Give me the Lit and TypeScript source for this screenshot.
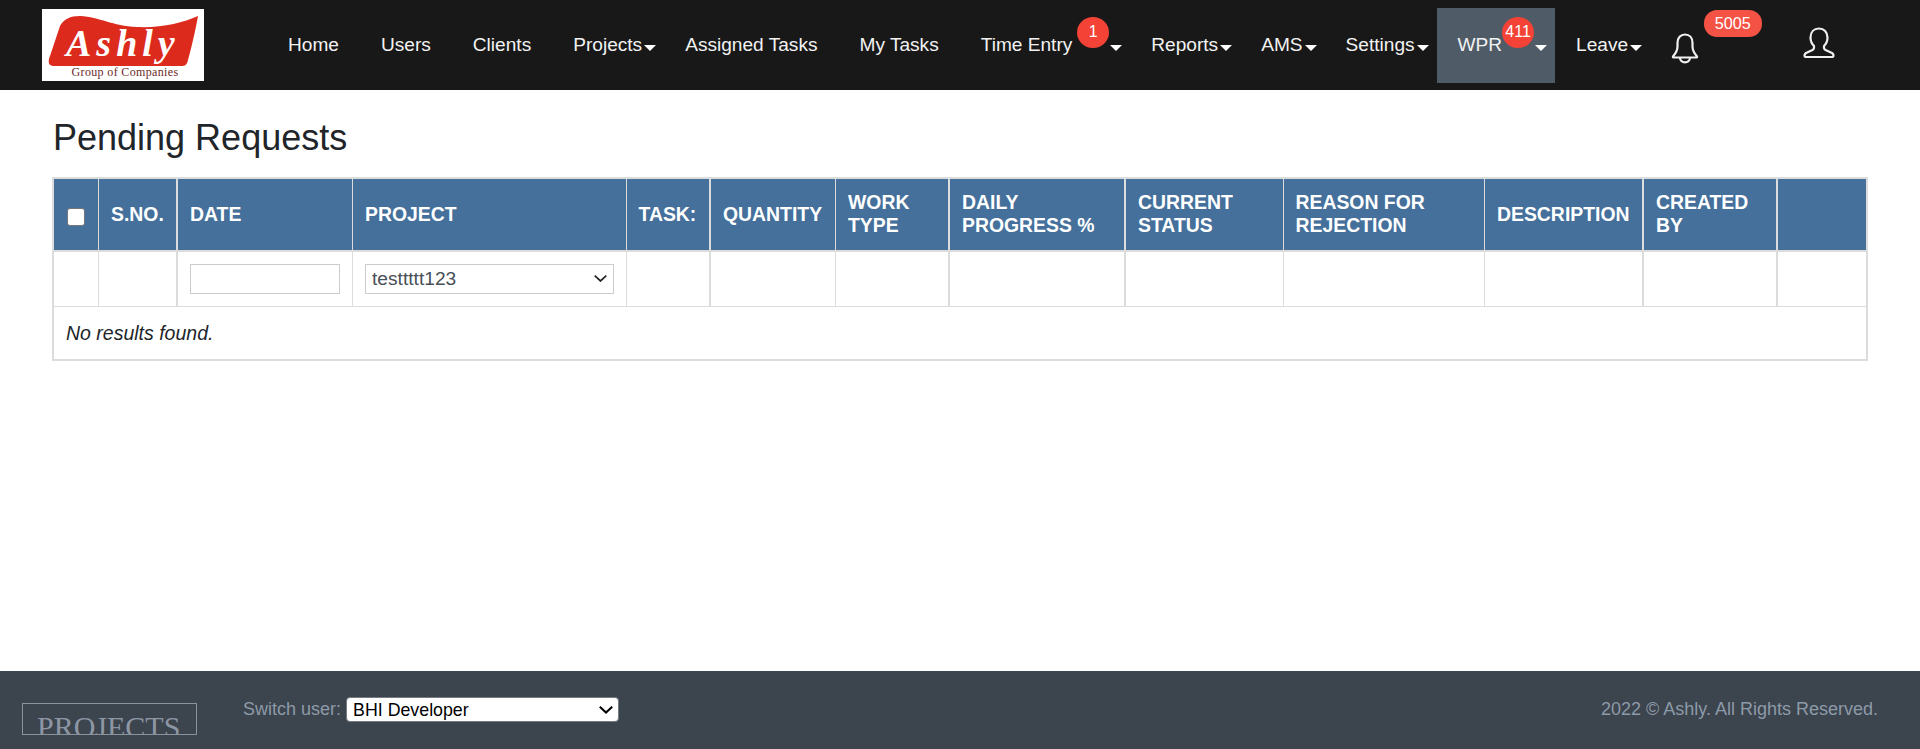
import { LitElement, html, css } from "lit";
import { customElement } from "lit/decorators.js";

const NAV: { label: string; caret?: boolean; badge?: string; active?: boolean }[] = [
  { label: "Home" },
  { label: "Users" },
  { label: "Clients" },
  { label: "Projects", caret: true },
  { label: "Assigned Tasks" },
  { label: "My Tasks" },
  { label: "Time Entry", caret: true, badge: "1" },
  { label: "Reports", caret: true },
  { label: "AMS", caret: true },
  { label: "Settings", caret: true },
  { label: "WPR", caret: true, badge: "411", active: true },
  { label: "Leave", caret: true },
];

const COLS: { label: string; w: number; thick?: boolean }[] = [
  { label: "", w: 45.5 },
  { label: "S.No.", w: 78.5, thick: true },
  { label: "Date", w: 175.5 },
  { label: "Project", w: 273.5 },
  { label: "Task:", w: 84, thick: true },
  { label: "Quantity", w: 125.5 },
  { label: "Work Type", w: 113.5, thick: true },
  { label: "Daily Progress %", w: 176, thick: true },
  { label: "Current Status", w: 158 },
  { label: "Reason for Rejection", w: 201.5 },
  { label: "Description", w: 158.5, thick: true },
  { label: "Created By", w: 134, thick: true },
  { label: "", w: 89.5 },
];

@customElement("app-root")
export class AppRoot extends LitElement {
  static styles = css`
    :host { display: flex; flex-direction: column; min-height: 749px; font-family: "Liberation Sans", Arial, sans-serif; color: #212529; background: #fff; }
    .top { height: 90px; background: #181818; display: flex; align-items: center; padding-left: 42px; flex: none; }
    .logo { width: 162px; height: 72px; background: #fff; margin-right: 63px; flex: none; display: block; }
    .logo-script { font: italic bold 38px "Liberation Serif", serif; fill: #fff; letter-spacing: 5px; }
    .logo-sub { font: 12px "Liberation Serif", serif; fill: #6d2a2a; letter-spacing: .35px; }
    nav { display: flex; align-items: center; height: 75px; }
    .item { display: flex; align-items: center; height: 75px; padding: 0 21px; color: #f2f2f2; font-size: 19.1px; white-space: nowrap; }
    .item.drop { padding-right: 8px; }
    .item.active { background: #4f5b67; }
    .caret { width: 0; height: 0; border-left: 6px solid transparent; border-right: 6px solid transparent; border-top: 6px solid #fff; margin-top: 6px; margin-left: 2px; }
    .count + .caret { margin-left: 1px; }
    .count { width: 32px; height: 31px; border-radius: 50%; background: #f44336; color: #fff; font-size: 16px; display: flex; align-items: center; justify-content: center; margin-top: -26px; margin-left: 5px; flex: none; }
    .item.active .count { margin-left: 0; }
    .bell-wrap { position: relative; margin-left: 21px; width: 28px; height: 31px; margin-top: 6px; }
    .bell-wrap svg, .user svg { display: block; }
    .pill { position: absolute; left: 32.5px; top: -22.5px; width: 58px; height: 27px; border-radius: 13px; background: #f55246; color: #fff; font-size: 16.2px; display: flex; align-items: center; justify-content: center; }
    .user { margin-left: 104px; margin-top: -5px; width: 32px; height: 31px; }
    main { flex: 1; padding: 0 52px; }
    h1 { margin: 0; font-weight: 400; font-size: 36px; line-height: 43px; padding: 26px 0 0 1px; height: 87px; box-sizing: border-box; color: #212529; }
    table { border-collapse: collapse; table-layout: fixed; width: 1814px; border: 2px solid #dcdcdc; }
    th { background: #44709b; color: #fff; font-size: 19.4px; line-height: 23.4px; font-weight: 700; text-transform: uppercase; text-align: left; padding: 12px; height: 71px; box-sizing: border-box; border: 1px solid #dcdcdc; border-bottom-width: 2px; vertical-align: middle; }
    td { border: 1px solid #dcdcdc; padding: 12px; box-sizing: border-box; height: 54px; }
    th.thick, td.thick { border-right-width: 2px; }
    .filter td { height: 55px; padding: 12px; }
    .filter input { display: block; width: 150px; height: 30px; box-sizing: border-box; border: 1px solid #ccc; background: #fff; margin: 0; }
    .sel { position: relative; display: block; }
    .sel svg { position: absolute; pointer-events: none; display: block; }
    .filter .sel { width: 249px; height: 30px; }
    .filter .sel svg { right: 7px; top: 11px; }
    .filter select { display: block; appearance: none; width: 249px; height: 30px; box-sizing: border-box; border: 1px solid #ccc; border-radius: 0; background: #fff; font: 19.2px "Liberation Sans", Arial, sans-serif; color: #495057; padding: 0 0 0 6px; margin: 0; }
    th input { appearance: none; width: 18px; height: 18px; margin: 6px 0 0 1px; display: block; box-sizing: border-box; background: #fff; border: 1px solid #767676; border-radius: 3px; }
    .empty td { font-style: italic; font-size: 19.5px; color: #212529; }
    footer { height: 78px; box-sizing: border-box; background: #3c444e; display: flex; align-items: flex-start; flex: none; color: #8d9aa8; font-size: 18px; padding: 26px 42px 0 22px; }
    .brand { width: 175px; height: 32px; box-sizing: border-box; border: 1px solid #8a929b; margin-top: 6px; overflow: hidden; font: 30px/1 "Liberation Serif", serif; color: #8d96a3; padding: 8px 0 0 14px; white-space: nowrap; }
    .switch { display: flex; align-items: center; margin-left: 46px; height: 25px; }
    .switch .sel { width: 273px; height: 25px; margin-left: 5px; }
    .switch .sel svg { right: 6px; top: 9px; }
    .switch select { appearance: none; display: block; width: 273px; height: 25px; box-sizing: border-box; border: 1px solid #767b82; border-radius: 4px; background: #fff; color: #000; font: 17.8px "Liberation Sans", Arial, sans-serif; padding: 0 0 0 6px; margin: 0; }
    .copy { margin-left: auto; height: 24px; line-height: 24px; }
  `;

  private navItem(n: (typeof NAV)[number]) {
    const cls = ["item", n.caret ? "drop" : "", n.active ? "active" : ""].join(" ");
    return html`<div class=${cls}>
      ${n.label}${n.badge ? html`<span class="count">${n.badge}</span>` : ""}${n.caret ? html`<span class="caret"></span>` : ""}
    </div>`;
  }

  render() {
    return html`
      <header class="top">
        <svg class="logo" viewBox="0 0 162 72" aria-label="Ashly">
          <path d="M18 17 C22 10 28 7 38 7 C58 8 70 17 95 18 C120 19 140 14 156 7 C153 24 149 40 146 51 C145 56 143 57 139 57 L12 57 C8 57 6 55 7 50 Z" fill="#dc2a1c"/>
          <text class="logo-script" x="24" y="47">Ashly</text>
          <text class="logo-sub" x="83" y="67" text-anchor="middle">Group of Companies</text>
        </svg>
        <nav>${NAV.map((n) => this.navItem(n))}</nav>
        <div class="bell-wrap">
          <svg width="28" height="31" viewBox="0 0 28 31" fill="none" stroke="#f0f0f0" stroke-width="2.2" stroke-linejoin="round">
            <path d="M2 23.5 C5 20 6.5 17.5 6.5 13.5 V10 C6.5 4.5 9.5 1.5 14 1.5 C18.5 1.5 21.5 4.5 21.5 10 V13.5 C21.5 17.5 23 20 26 23.5 Q26.5 24.5 25 24.5 H3 Q1.5 24.5 2 23.5 Z"/>
            <path d="M9 24.5 C9 31 19 31 19 24.5"/>
          </svg>
          <span class="pill">5005</span>
        </div>
        <div class="user">
          <svg width="32" height="31" viewBox="0 0 32 31" fill="none" stroke="#f0f0f0" stroke-width="2.2" stroke-linejoin="round">
            <path d="M16 1.5 C11 1.5 7.5 5 7.5 10.5 C7.5 14 9 17 11 19 V21 Q11 22 9.5 23 L3 26 Q1.5 27 1.5 28.5 Q1.5 30 3 30 H29 Q30.5 30 30.5 28.5 Q30.5 27 29 26 L22.5 23 Q21 22 21 21 V19 C23 17 24.5 14 24.5 10.5 C24.5 5 21 1.5 16 1.5 Z"/>
          </svg>
        </div>
      </header>
      <main>
        <h1>Pending Requests</h1>
        <table>
          <colgroup>${COLS.map((c) => html`<col style="width:${c.w}px" />`)}</colgroup>
          <thead>
            <tr>
              ${COLS.map((c, i) => html`<th class=${c.thick ? "thick" : ""}>${i === 0 ? html`<input type="checkbox" />` : c.label}</th>`)}
            </tr>
          </thead>
          <tbody>
            <tr class="filter">
              ${COLS.map((c, i) => html`<td class=${c.thick ? "thick" : ""}>
                ${i === 2 ? html`<input type="text" />` : ""}
                ${i === 3
                  ? html`<span class="sel"><select><option>testtttt123</option></select>
                      <svg width="13" height="7" viewBox="0 0 13 7" fill="none" stroke="#222" stroke-width="1.7"><path d="M.7 .7 L6.5 6 L12.3 .7"/></svg></span>`
                  : ""}
              </td>`)}
            </tr>
            <tr class="empty"><td colspan="13">No results found.</td></tr>
          </tbody>
        </table>
      </main>
      <footer>
        <div class="brand">PROJECTS</div>
        <div class="switch">Switch user:<span class="sel"><select><option>BHI Developer</option></select>
          <svg width="14" height="8" viewBox="0 0 14 8" fill="none" stroke="#000" stroke-width="2"><path d="M.8 .8 L7 6.6 L13.2 .8"/></svg></span></div>
        <div class="copy">2022 © Ashly. All Rights Reserved.</div>
      </footer>
    `;
  }
}
